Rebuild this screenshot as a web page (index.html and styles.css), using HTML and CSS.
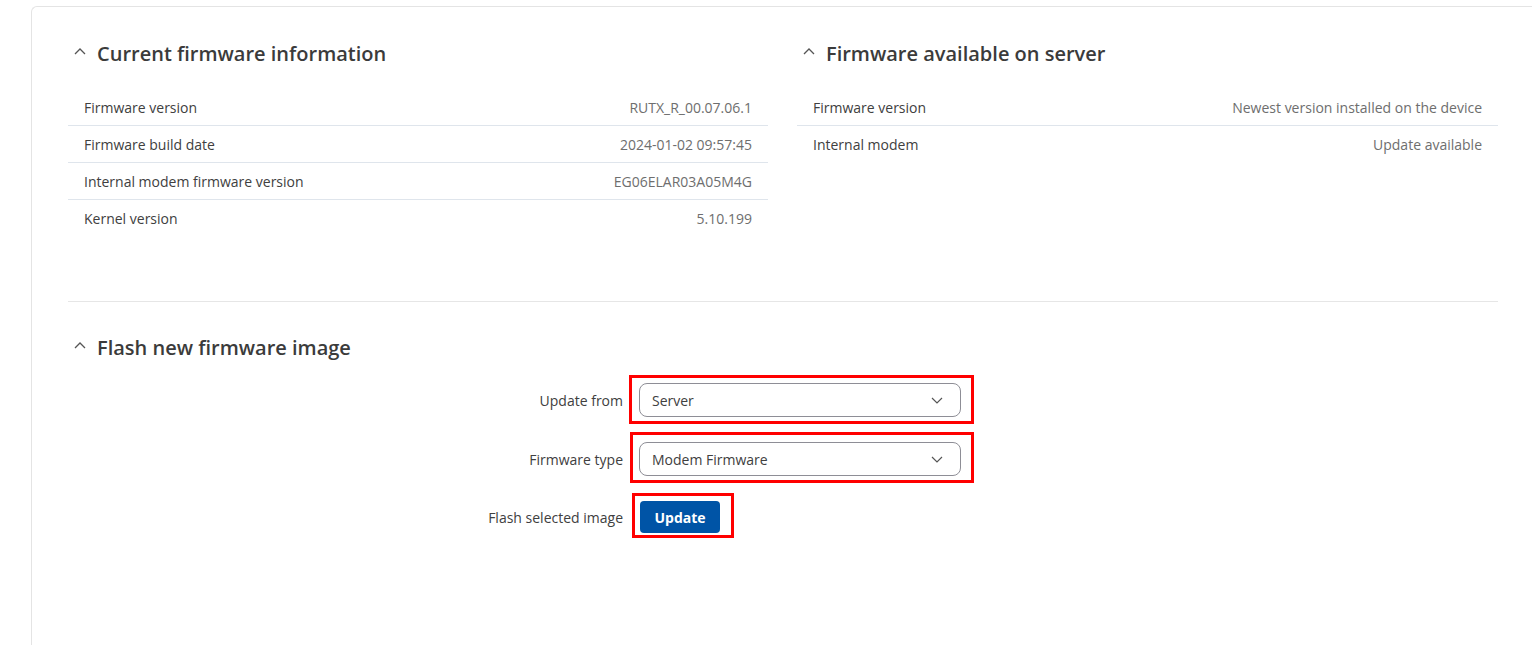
FILE: index.html
```html
<!DOCTYPE html>
<html>
	<head>
		<meta charset="utf-8" />
		<title>Firmware</title>
		<link rel="stylesheet" href="styles.css">
	</head>
	<body>
		<div class="card">
			<div class="columns">
				<div class="section">
					<h2 class="section-title">
						<svg class="chevron" width="12" height="8" viewBox="0 0 12 8"><path d="M1 7 L6 2 L11 7" fill="none" stroke="#555" stroke-width="1.3"/></svg>
						Current firmware information
					</h2>
					<ul class="info">
						<li><span class="name">Firmware version</span><span class="val">RUTX_R_00.07.06.1</span></li>
						<li><span class="name">Firmware build date</span><span class="val">2024-01-02 09:57:45</span></li>
						<li><span class="name">Internal modem firmware version</span><span class="val">EG06ELAR03A05M4G</span></li>
						<li><span class="name">Kernel version</span><span class="val">5.10.199</span></li>
					</ul>
				</div>
				<div class="section">
					<h2 class="section-title">
						<svg class="chevron" width="12" height="8" viewBox="0 0 12 8"><path d="M1 7 L6 2 L11 7" fill="none" stroke="#555" stroke-width="1.3"/></svg>
						Firmware available on server
					</h2>
					<ul class="info">
						<li><span class="name">Firmware version</span><span class="val">Newest version installed on the device</span></li>
						<li><span class="name">Internal modem</span><span class="val">Update available</span></li>
					</ul>
				</div>
			</div>

			<div class="divider"></div>

			<div class="section">
				<h2 class="section-title">
					<svg class="chevron" width="12" height="8" viewBox="0 0 12 8"><path d="M1 7 L6 2 L11 7" fill="none" stroke="#555" stroke-width="1.3"/></svg>
					Flash new firmware image
				</h2>
				<div class="form">
					<label>Update from</label>
					<div class="control mark-1">
						<div class="select"><span>Server</span>
							<svg width="12" height="7" viewBox="0 0 12 7"><path d="M1 1 L6 6 L11 1" fill="none" stroke="#555" stroke-width="1.2"/></svg>
						</div>
					</div>
					<label>Firmware type</label>
					<div class="control mark-2">
						<div class="select"><span>Modem Firmware</span>
							<svg width="12" height="7" viewBox="0 0 12 7"><path d="M1 1 L6 6 L11 1" fill="none" stroke="#555" stroke-width="1.2"/></svg>
						</div>
					</div>
					<label>Flash selected image</label>
					<div class="control mark-3">
						<button class="btn">Update</button>
					</div>
				</div>
			</div>
		</div>
	</body>
</html>
```

FILE: styles.css
```css
body, html {
	margin: 0;
	padding: 0;
	overflow: hidden;
	background: #fff;
	font-family: "Open Sans", "Liberation Sans", sans-serif;
	font-size: 14px;
	color: #404040;
}

.card {
	margin: 6px 0 0 31px;
	width: 1501px;
	height: 639px;
	box-sizing: border-box;
	border: 1px solid #e4e4e4;
	border-right: 0;
	border-bottom: 0;
	border-radius: 6px 0 0 0;
	padding: 32px 34px 0 36px;
}

.columns {
	display: grid;
	grid-template-columns: 700px 1fr;
	column-gap: 29px;
}

.section-title {
	margin: 0;
	display: flex;
	align-items: center;
	height: 28px;
	font-size: 20px;
	font-weight: 600;
	color: #3b3b3b;
	padding-left: 6px;
}

.section-title .chevron {
	margin-right: 11px;
	margin-top: -4px;
}

.info {
	list-style: none;
	margin: 22px 0 0 0;
	padding: 0;
}

.info li {
	display: flex;
	justify-content: space-between;
	align-items: center;
	height: 37px;
	box-sizing: border-box;
	padding: 0 16px;
	border-bottom: 1px solid #dfe5ec;
}

.info li:last-child {
	border-bottom: 0;
}

.info .name {
	color: #404040;
}

.info .val {
	color: #6e6e6e;
}

.divider {
	height: 1px;
	background: #e6e6e6;
	margin: 64px 0 31px 0;
}

.form {
	display: grid;
	grid-template-columns: 555px auto;
	column-gap: 16px;
	row-gap: 25px;
	margin-top: 22px;
	align-items: center;
	justify-content: start;
}

.form label {
	text-align: right;
	color: #404040;
}

.control {
	position: relative;
	justify-self: start;
}

.select {
	width: 322px;
	height: 34px;
	box-sizing: border-box;
	border: 1px solid #8e8e96;
	border-radius: 8px;
	display: flex;
	align-items: center;
	justify-content: space-between;
	padding: 0 17px 0 12px;
	color: #404040;
}

.btn {
	width: 80px;
	height: 32px;
	border: 0;
	border-radius: 4px;
	background: #0054a6;
	color: #fff;
	font-family: inherit;
	font-size: 14px;
	font-weight: 700;
	margin-left: 1px;
}

/* red annotation frames */
.control::after {
	content: "";
	position: absolute;
	border: 3px solid #ff0000;
	pointer-events: none;
}

.mark-1::after {
	left: -10px;
	right: -13px;
	top: -8px;
	bottom: -7px;
}

.mark-2::after {
	left: -9px;
	right: -13px;
	top: -10px;
	bottom: -7px;
}

.mark-3::after {
	left: -7px;
	right: -14px;
	top: -8px;
	bottom: -5px;
}
```
